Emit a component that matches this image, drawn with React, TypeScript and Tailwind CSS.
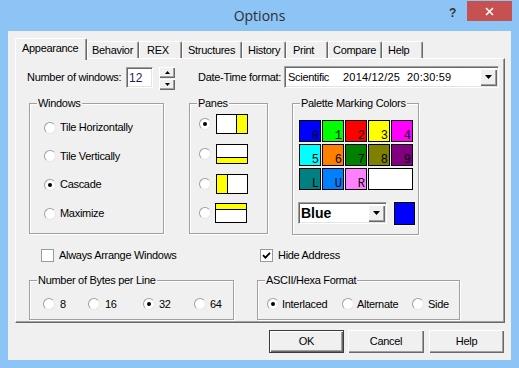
import React from "react";

const Radio = ({ checked = false }: { checked?: boolean }) => (
  <span className="relative inline-block w-[12px] h-[12px] rounded-full bg-white border border-t-[#a0a0a0] border-l-[#a0a0a0] border-b-[#e6e6e6] border-r-[#e6e6e6] shrink-0">
    {checked && <span className="absolute left-[3px] top-[3px] w-[4px] h-[4px] rounded-full bg-black" />}
  </span>
);

const Check = ({ checked = false }: { checked?: boolean }) => (
  <span className="inline-flex w-[13px] h-[13px] bg-white border border-[#9a9a9a] shrink-0 items-center justify-center">
    {checked && (
      <svg width="9" height="9" viewBox="0 0 9 9">
        <path d="M1 4.2 L3.4 6.6 L8 1.8" stroke="black" strokeWidth="1.8" fill="none" />
      </svg>
    )}
  </span>
);

const Group = ({ label, className, children }: { label: string; className: string; children?: React.ReactNode }) => (
  <div className={"relative border border-[#a0a0a0] shadow-[inset_1px_1px_0_#fff,1px_1px_0_#fff] " + className}>
    <span className="absolute left-[7px] top-[-8px] px-[1px] bg-[#f0f0f0] leading-[14px] whitespace-nowrap">{label}</span>
    {children}
  </div>
);

const DropBtn = () => (
  <div className="w-[17px] h-[17px] bg-[#f0f0f0] shadow-[inset_1px_1px_0_#fff,inset_-1px_-1px_0_#696969,inset_-2px_-2px_0_#a0a0a0] flex items-center justify-center">
    <svg width="7" height="4" viewBox="0 0 7 4">
      <polygon points="0,0 7,0 3.5,4" fill="black" />
    </svg>
  </div>
);

const sunken =
  "border border-t-[#a0a0a0] border-l-[#a0a0a0] border-r-white border-b-white shadow-[inset_1px_1px_0_#696969,inset_-1px_-1px_0_#e3e3e3] bg-white";

const tabs = [
  { label: "Appearance", w: "w-[72px]", pl: "pl-[6px]", sel: true },
  { label: "Behavior", w: "w-[52px]", pl: "pl-[4px]" },
  { label: "REX", w: "w-[43px]", pl: "pl-[7px]" },
  { label: "Structures", w: "w-[60px]", pl: "pl-[5px]" },
  { label: "History", w: "w-[44px]", pl: "pl-[5px]" },
  { label: "Print", w: "w-[42px]", pl: "pl-[6px]" },
  { label: "Compare", w: "w-[54px]", pl: "pl-[4px]" },
  { label: "Help", w: "w-[41px]", pl: "pl-[5px]" },
];

const palette: { bg: string; t: string }[] = [
  { bg: "bg-[#0000ff]", t: "0" },
  { bg: "bg-[#00ff00]", t: "1" },
  { bg: "bg-[#ff0000]", t: "2" },
  { bg: "bg-[#ffff00]", t: "3" },
  { bg: "bg-[#ff00ff]", t: "4" },
  { bg: "bg-[#00ffff]", t: "5" },
  { bg: "bg-[#ff8000]", t: "6" },
  { bg: "bg-[#008000]", t: "7" },
  { bg: "bg-[#808000]", t: "8" },
  { bg: "bg-[#800080]", t: "9" },
  { bg: "bg-[#008080]", t: "L" },
  { bg: "bg-[#0080ff]", t: "U" },
  { bg: "bg-[#ff80ff]", t: "R" },
];

const btn =
  "h-[23px] flex items-center justify-center bg-[#f0f0f0] shadow-[inset_1px_1px_0_#fff,inset_-1px_-1px_0_#696969,inset_-2px_-2px_0_#a0a0a0]";

export default function App() {
  return (
    <div className="w-[519px] h-[368px] bg-[#8cc4f6] flex flex-col font-['Liberation_Sans',Arial,sans-serif] text-[11px] tracking-[-0.3px] text-black overflow-hidden">
      {/* Title bar */}
      <div className="relative h-[31px] flex items-center justify-center">
        <span className="font-['Open_Sans',sans-serif] text-[14px] tracking-normal text-[#2e2e2e] -mt-[1px]">Options</span>
        <div className="absolute right-[7px] top-[1px] flex items-start">
          <span className="font-['Liberation_Sans',Arial,sans-serif] font-bold text-[12px] leading-none mr-[11px] mt-[6px] text-[#333]">?</span>
          <div className="w-[45px] h-[20px] bg-[#c75050] flex items-center justify-center">
            <svg width="9" height="9" viewBox="0 0 9 9">
              <path d="M1 1 L8 8 M8 1 L1 8" stroke="white" strokeWidth="1.6" />
            </svg>
          </div>
        </div>
      </div>

      {/* Client */}
      <div className="ml-[8px] w-[503px] h-[329px] bg-[#f0f0f0] flex flex-col">
        {/* Tabs */}
        <div className="mt-[6px] ml-[7px] h-[21px] flex items-end">
          {tabs.map((t) =>
            t.sel ? (
              <div
                key={t.label}
                className={`relative z-10 ${t.w} h-[22px] -mb-[2px] bg-[#f0f0f0] border-t border-l border-white border-r border-r-[#696969] rounded-t-[2px] shadow-[inset_-1px_0_0_#a0a0a0] ${t.pl} pt-[2px] leading-[14px]`}
              >
                {t.label}
              </div>
            ) : (
              <div
                key={t.label}
                className={`${t.w} h-[17px] bg-[#f0f0f0] border-t border-l border-white border-r border-r-[#696969] rounded-t-[2px] shadow-[inset_-1px_0_0_#a0a0a0] ${t.pl} flex items-center`}
              >
                {t.label}
              </div>
            )
          )}
        </div>

        {/* Panel */}
        <div className="ml-[7px] w-[490px] h-[265px] border-t border-l border-white border-r border-b border-r-[#696969] border-b-[#696969] shadow-[inset_-1px_-1px_0_#a0a0a0] flex flex-col">
          {/* Row 1 */}
          <div className="mt-[7px] h-[22px] flex items-start">
            <span className="ml-[11px] w-[99px] leading-[22px]">Number of windows:</span>
            <div className={`${sunken} mt-[1px] w-[27px] h-[21px] flex items-center pl-[2px] text-[12px] text-[#1e1a66] tracking-normal`}>12</div>
            <div className="ml-[6px] mt-[1px] flex flex-col gap-[1px]">
              <div className={`${btn} !h-[11px] w-[16px]`}>
                <svg width="5" height="3" viewBox="0 0 5 3">
                  <polygon points="0,3 5,3 2.5,0" fill="black" />
                </svg>
              </div>
              <div className={`${btn} !h-[11px] w-[16px]`}>
                <svg width="5" height="3" viewBox="0 0 5 3">
                  <polygon points="0,0 5,0 2.5,3" fill="black" />
                </svg>
              </div>
            </div>
            <span className="ml-[23px] w-[86px] leading-[22px]">Date-Time format:</span>
            <div className={`${sunken} w-[215px] h-[22px] flex items-center justify-between pl-[3px] pr-[1px]`}>
              <div className="flex items-center whitespace-nowrap text-[11px]">
                <span className="w-[55px]">Scientific</span>
                <span className="w-[64px] tracking-[0.2px]">2014/12/25</span>
                <span className="tracking-[0.2px]">20:30:59</span>
              </div>
              <DropBtn />
            </div>
          </div>

          {/* Groups row */}
          <div className="mt-[15px] flex items-start">
            <Group label="Windows" className="ml-[13px] w-[135px] h-[131px]">
              <div className="flex flex-col pt-[9px] pl-[14px]">
                <div className="h-[29px] flex items-center">
                  <Radio />
                  <span className="ml-[4px]">Tile Horizontally</span>
                </div>
                <div className="h-[28px] flex items-center">
                  <Radio />
                  <span className="ml-[4px]">Tile Vertically</span>
                </div>
                <div className="h-[29px] flex items-center">
                  <Radio checked />
                  <span className="ml-[4px]">Cascade</span>
                </div>
                <div className="h-[29px] flex items-center">
                  <Radio />
                  <span className="ml-[4px]">Maximize</span>
                </div>
              </div>
            </Group>

            <Group label="Panes" className="ml-[25px] w-[79px] h-[131px]">
              <div className="flex flex-col pt-[5px] pl-[9px]">
                <div className="h-[30px] flex items-center">
                  <Radio checked />
                  <div className="ml-[5px] w-[32px] h-[20px] border border-black bg-white flex">
                    <div className="flex-1" />
                    <div className="w-[11px] border-l border-black bg-[#ffff00]" />
                  </div>
                </div>
                <div className="h-[30px] flex items-center">
                  <Radio />
                  <div className="ml-[5px] w-[32px] h-[20px] border border-black bg-white flex flex-col">
                    <div className="flex-1" />
                    <div className="h-[6px] border-t border-black bg-[#ffff00]" />
                  </div>
                </div>
                <div className="h-[29px] flex items-center">
                  <Radio />
                  <div className="ml-[5px] w-[32px] h-[20px] border border-black bg-white flex">
                    <div className="w-[11px] border-r border-black bg-[#ffff00]" />
                    <div className="flex-1" />
                  </div>
                </div>
                <div className="h-[29px] flex items-center">
                  <Radio />
                  <div className="ml-[4px] w-[32px] h-[20px] border border-black bg-white flex flex-col">
                    <div className="h-[6px] border-b border-black bg-[#ffff00]" />
                    <div className="flex-1" />
                  </div>
                </div>
              </div>
            </Group>

            <Group label="Palette Marking Colors" className="ml-[24px] w-[127px] h-[132px]">
              <div className="pt-[16px] pl-[6px]">
                <div className="grid grid-cols-[22px_22px_22px_22px_22px] gap-x-[1px] gap-y-[2px] w-[114px]">
                  {palette.map((p) => (
                    <div
                      key={p.t}
                      className={`${p.bg} h-[22px] border border-black flex items-end justify-end pr-[1px] font-['Liberation_Mono',monospace] text-[12px] leading-[10px] tracking-normal`}
                    >
                      {p.t}
                    </div>
                  ))}
                  <div className="col-span-2 h-[22px] border border-black bg-white" />
                </div>
                <div className="mt-[12px] -ml-[1px] flex items-start">
                  <div className={`${sunken} w-[89px] h-[22px] flex items-center justify-between pl-[2px] pr-[1px]`}>
                    <span className="font-bold text-[14px] tracking-normal">Blue</span>
                    <DropBtn />
                  </div>
                  <div className="ml-[7px] w-[21px] h-[23px] border border-black bg-[#0000ff] shadow-[0_0_0_1px_#f8f8f8]" />
                </div>
              </div>
            </Group>
          </div>

          {/* Checkbox row */}
          <div className="mt-[14px] h-[13px] flex items-center">
            <div className="ml-[25px] w-[219px] flex items-center">
              <Check />
              <span className="ml-[5px]">Always Arrange Windows</span>
            </div>
            <Check checked />
            <span className="ml-[5px]">Hide Address</span>
          </div>

          {/* Bottom groups */}
          <div className="mt-[18px] flex items-start">
            <Group label="Number of Bytes per Line" className="ml-[13px] w-[205px] h-[40px]">
              <div className="h-full pt-[8px] pl-[13px] flex items-center">
                <div className="w-[45px] flex items-center">
                  <Radio />
                  <span className="ml-[5px]">8</span>
                </div>
                <div className="w-[55px] flex items-center">
                  <Radio />
                  <span className="ml-[5px]">16</span>
                </div>
                <div className="w-[51px] flex items-center">
                  <Radio checked />
                  <span className="ml-[4px]">32</span>
                </div>
                <div className="flex items-center">
                  <Radio />
                  <span className="ml-[4px]">64</span>
                </div>
              </div>
            </Group>
            <Group label="ASCII/Hexa Format" className="ml-[23px] w-[203px] h-[40px]">
              <div className="h-full pt-[8px] pl-[9px] flex items-center">
                <div className="w-[75px] flex items-center">
                  <Radio checked />
                  <span className="ml-[3px]">Interlaced</span>
                </div>
                <div className="w-[70px] flex items-center">
                  <Radio />
                  <span className="ml-[3px]">Alternate</span>
                </div>
                <div className="flex items-center">
                  <Radio />
                  <span className="ml-[4px]">Side</span>
                </div>
              </div>
            </Group>
          </div>
        </div>

        {/* Buttons */}
        <div className="mt-[7px] flex justify-end pr-[7px]">
          <div className={`${btn} w-[75px] border border-[#3c3c3c]`}>OK</div>
          <div className={`${btn} ml-[4px] w-[76px]`}>Cancel</div>
          <div className={`${btn} ml-[5px] w-[75px]`}>Help</div>
        </div>
      </div>
    </div>
  );
}
